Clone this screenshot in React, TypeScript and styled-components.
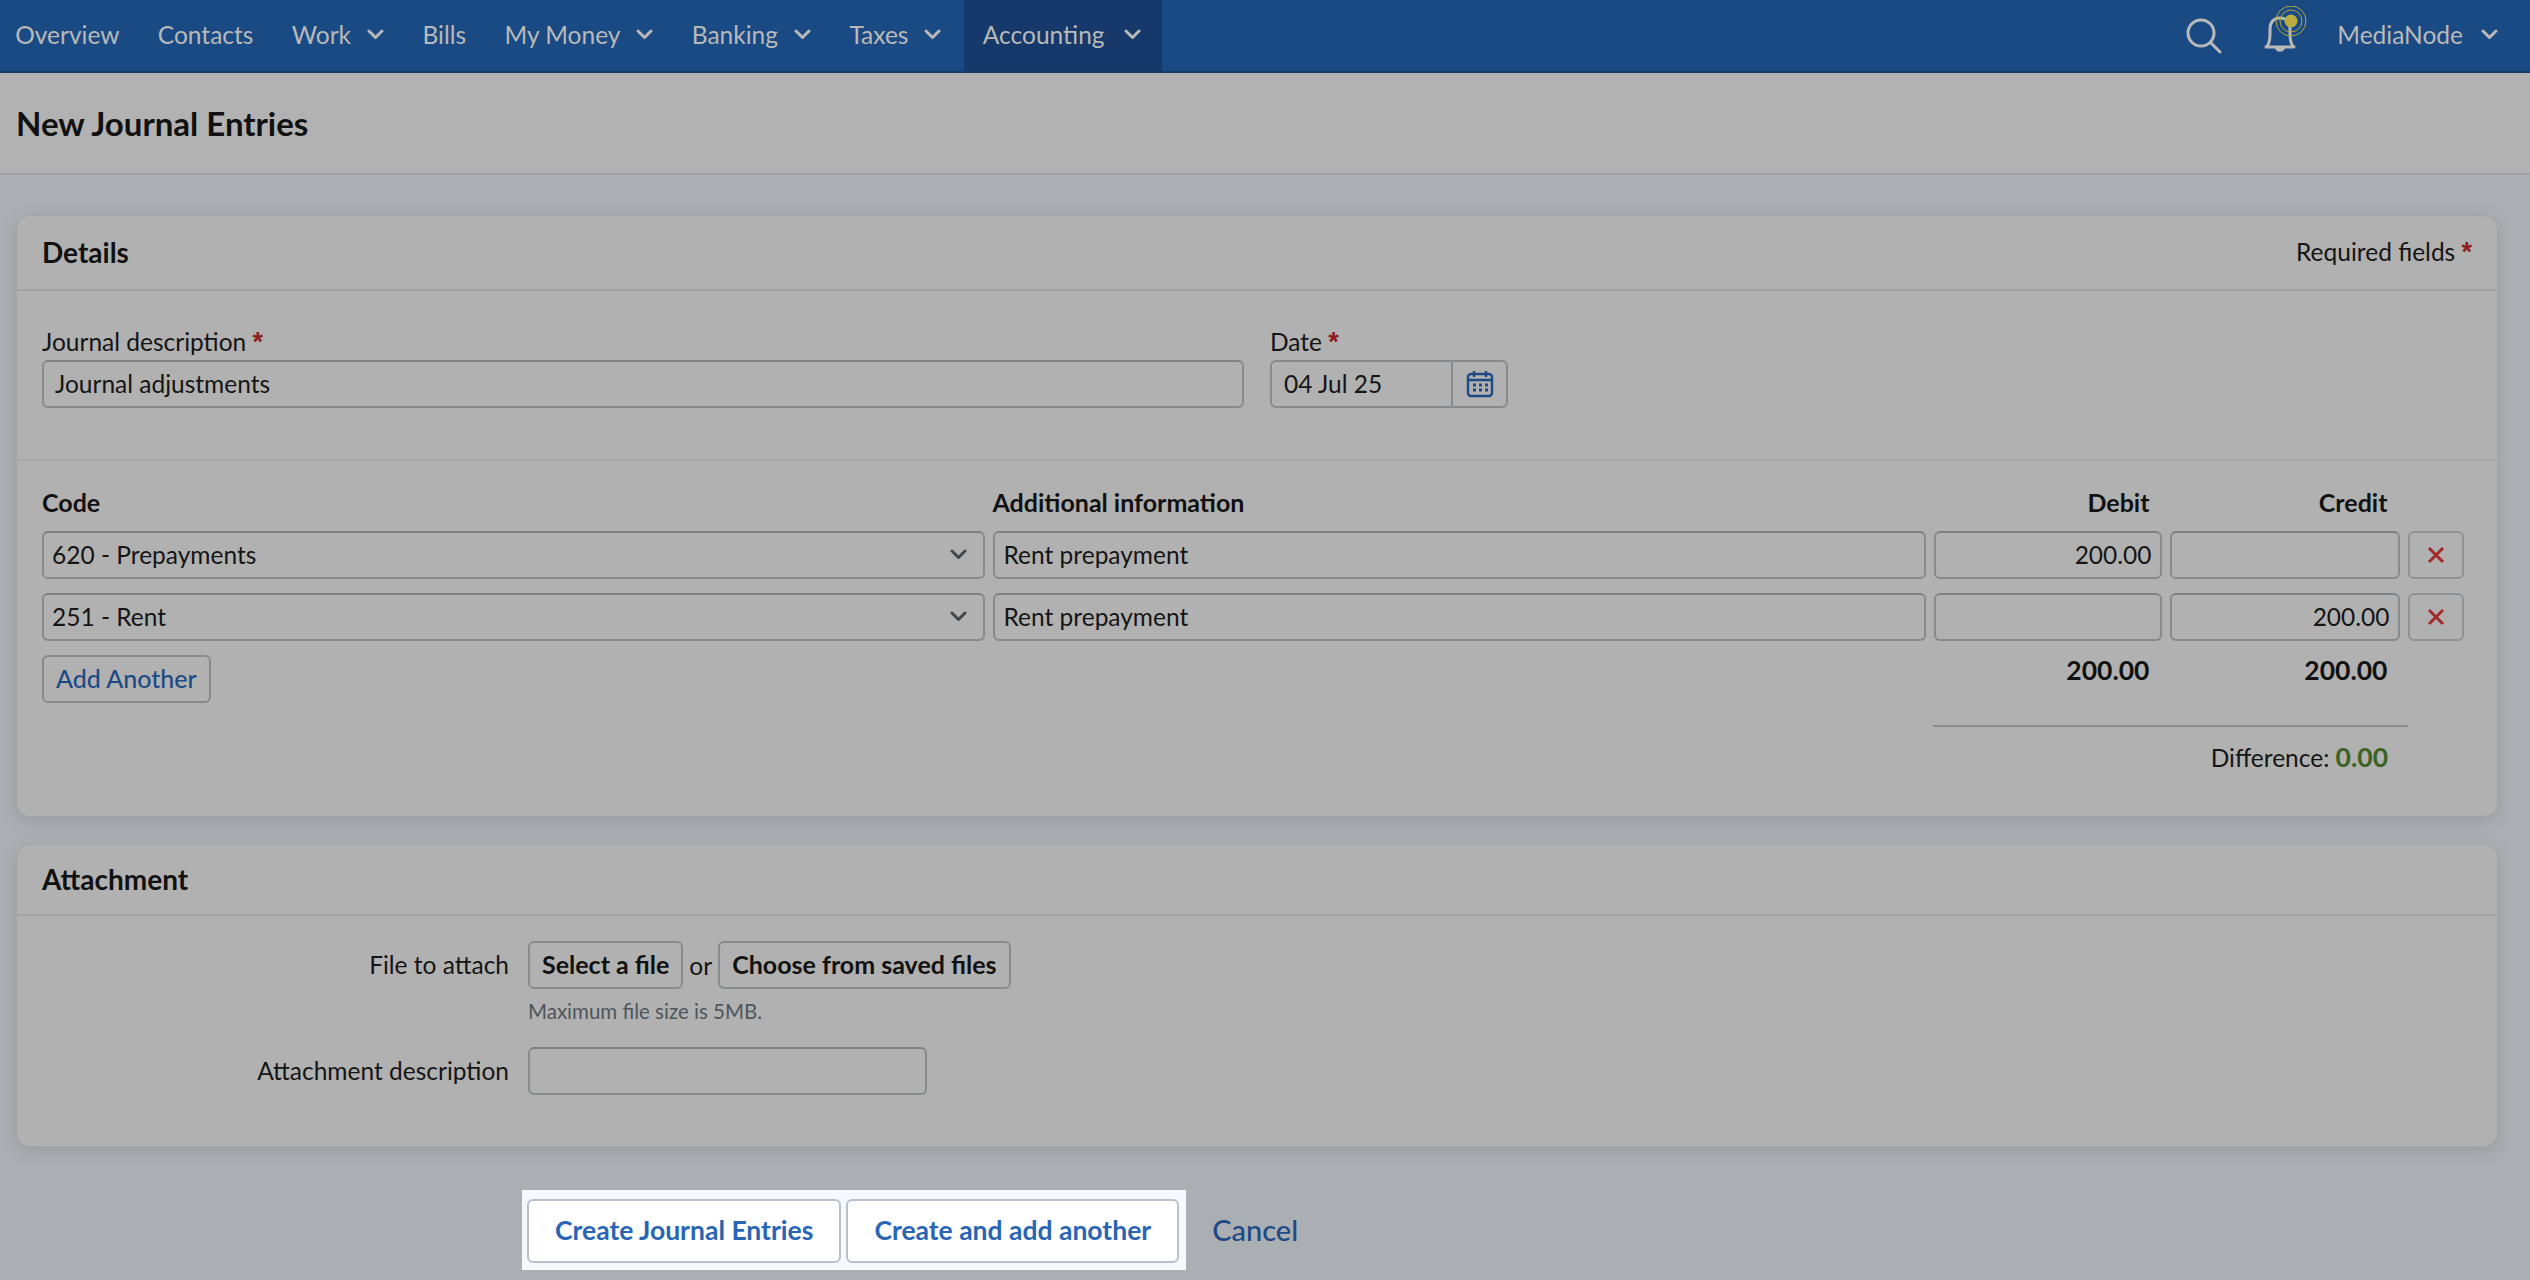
import React from 'react';
import styled, { createGlobalStyle } from 'styled-components';

const GlobalStyle = createGlobalStyle`
  html, body {
    margin: 0;
    padding: 0;
    width: 2530px;
    height: 1280px;
    overflow: hidden;
    background: #abaeb3;
    font-family: 'Lato', 'Liberation Sans', sans-serif;
    color: #151515;
  }
  * { box-sizing: border-box; }
`;

const TopBar = styled.nav`
  height: 73px;
  background: #1a4a83;
  border-bottom: 2px solid #153a68;
  display: flex;
  justify-content: space-between;
  color: #b9b9b9;
  font-size: 24.5px;
`;

const NavList = styled.div`
  display: flex;
  margin-left: -4px;
`;

const NavItem = styled.div<{ $active?: boolean }>`
  display: flex;
  align-items: center;
  gap: ${p => (p.$active ? 19 : 16)}px;
  margin-left: ${p => (p.$active ? 3 : 0)}px;
  padding: 0 ${p => (p.$active ? 21 : 19.2)}px 3px 19.2px;
  background: ${p => (p.$active ? '#14396a' : 'transparent')};
`;

const NavTools = styled.div`
  display: flex;
  align-items: center;
  padding-right: 32px;
`;

const UserMenu = styled.div`
  display: flex;
  align-items: center;
  gap: 18px;
  margin-left: 30px;
  padding-bottom: 3px;
`;

const SearchIcon = styled.svg`
  width: 36px;
  height: 38px;
  margin-right: 41px;
`;

const BellIcon = styled.svg`
  width: 44px;
  height: 48px;
  margin-bottom: 11px;
`;

const TitleBar = styled.header`
  height: 102px;
  background: #b2b2b2;
  border-bottom: 2px solid #a0a2a5;
  display: flex;
  align-items: center;
  padding: 0 16px 1px;

  h1 {
    margin: 0;
    font-size: 33px;
    font-weight: 700;
    color: #111;
  }
`;

const Content = styled.main`
  display: flex;
  flex-direction: column;
  gap: 27px;
  padding: 40px 32px 0 16px;
`;

const Card = styled.section`
  background: #b1b1b1;
  border: 1px solid #a3a5a8;
  border-radius: 14px;
  box-shadow: 0 4px 14px rgba(120, 124, 130, 0.35);
`;

const CardHeader = styled.div<{ $compact?: boolean }>`
  height: ${p => (p.$compact ? 71 : 75)}px;
  display: flex;
  align-items: center;
  justify-content: space-between;
  padding: 0 25px 2px;
  border-bottom: 2px solid #a2a3a5;
  font-size: 24.5px;

  h2 {
    margin: 0;
    font-size: 28px;
    font-weight: 700;
    color: #111;
  }
`;

const Star = styled.span`
  font-family: 'Liberation Sans', sans-serif;
  font-size: 27px;
  line-height: 0;
  font-weight: 700;
  color: #8f1d1d;
`;

const DetailsTop = styled.div`
  display: flex;
  gap: 26px;
  padding: 36px 25px 51px;
  border-bottom: 2px solid #a6a7a8;
`;

const FieldGroup = styled.div<{ $width: number }>`
  width: ${p => p.$width}px;
  display: flex;
  flex-direction: column;
  gap: 3px;
`;

const Label = styled.label`
  font-size: 24.5px;
  line-height: 30px;
`;

const Field = styled.div<{ $align?: string; $inset?: number }>`
  height: 48px;
  min-width: 0;
  display: flex;
  align-items: center;
  justify-content: ${p => p.$align || 'flex-start'};
  padding: 0 8px 2px ${p => p.$inset ?? 9}px;
  background: #b1b1b1;
  border: 2px solid #878b8d;
  border-top-color: #7d8183;
  border-radius: 6px;
  font-size: 24.5px;
  color: #151515;
`;

const Lined = styled.div`
  padding: 0 25px;
`;

const Chevron = styled.svg`
  width: 17px;
  height: 11px;
  flex: none;
`;

const DateField = styled.div`
  display: flex;
  height: 48px;
  border: 2px solid #878b8d;
  border-radius: 6px;
  font-size: 24.5px;

  span {
    flex: 1;
    display: flex;
    align-items: center;
    padding: 0 0 2px 12px;
  }
`;

const CalendarButton = styled.div`
  width: 55px;
  display: flex;
  align-items: center;
  justify-content: center;
  border-left: 2px solid #878b8d;
`;

const LinesGrid = styled.div`
  display: grid;
  grid-template-columns: 942.5px 933px 228px 230px 56px;
  column-gap: 8px;
  row-gap: 14px;
  padding-top: 27px;
`;

const HeadCell = styled.div<{ $right?: boolean }>`
  font-size: 25px;
  font-weight: 700;
  line-height: 29px;
  color: #111;
  text-align: ${p => (p.$right ? 'right' : 'left')};
  padding-right: ${p => (p.$right ? '12px' : '0')};
`;

const SelectField = styled(Field)`
  justify-content: space-between;
  padding-left: 8px;
  padding-right: 16px;
`;

const RemoveButton = styled.div`
  height: 48px;
  display: flex;
  align-items: center;
  justify-content: center;
  border: 2px solid #8f9395;
  border-radius: 6px;
`;

const LinesFooter = styled.div`
  display: grid;
  grid-template-columns: 1883.5px 228px 230px;
  column-gap: 8px;
  margin-top: 14px;
`;

const OutlineButton = styled.div<{ $link?: boolean }>`
  justify-self: start;
  height: 48px;
  display: inline-flex;
  align-items: center;
  padding: 0 12px 2px;
  border: 2px solid #878b8d;
  border-radius: 6px;
  font-size: 25px;
  font-weight: ${p => (p.$link ? 500 : 700)};
  color: ${p => (p.$link ? '#1c4a85' : '#111')};
`;

const Total = styled.div`
  font-size: 26.5px;
  font-weight: 700;
  text-align: right;
  padding-right: 12px;
  line-height: 30px;
  color: #111;
`;

const DifferenceBlock = styled.div`
  width: 475px;
  margin: 22px 0 0 1891px;
  padding: 15px 20px 0 0;
  border-top: 2px solid #8b8d8f;
  text-align: right;
  font-size: 24.5px;
  line-height: 30px;

  b {
    font-size: 26.5px;
    color: #3a6324;
    font-weight: 700;
  }
`;

const LinesBottom = styled.div`
  padding-bottom: 43px;
`;

const AttachBody = styled.div`
  display: grid;
  grid-template-columns: 476px 1fr;
  column-gap: 19px;
  row-gap: 7px;
  align-items: center;
  padding: 25px 16px 51px;
`;

const FormLabel = styled.div`
  text-align: right;
  font-size: 24.5px;
  padding-bottom: 2px;
`;

const FileRow = styled.div`
  display: flex;
  align-items: center;
  gap: 6px;
  font-size: 24.5px;
`;

const Hint = styled.div`
  grid-column: 2;
  font-size: 20.5px;
  line-height: 30px;
  margin-bottom: 14px;
  color: #4d565c;
`;

const ShortField = styled(Field)`
  width: 399px;
`;

const Actions = styled.div`
  display: flex;
  align-items: center;
  margin: 16px 0 0 506px;
`;

const Highlight = styled.div`
  display: flex;
  gap: 5px;
  padding: 9px 7px 7px 5px;
  background: #f5f8fe;
`;

const SubmitButton = styled.div`
  height: 64px;
  display: flex;
  align-items: center;
  justify-content: center;
  padding: 0 26px 2px;
  background: #fff;
  border: 2px solid #b9c0cb;
  border-radius: 6px;
  font-size: 26.5px;
  font-weight: 700;
  color: #2a65b5;
`;

const CancelLink = styled.a`
  margin-left: 26px;
  padding-bottom: 2px;
  font-size: 29px;
  font-weight: 500;
  color: #1d4a85;
`;

const ChevronDown = ({ color = '#b9b9b9' }: { color?: string }) => (
  <Chevron viewBox="0 0 17 11" fill="none" stroke={color} strokeWidth="3" strokeLinecap="round" strokeLinejoin="round">
    <path d="M2 2l6.5 6.5L15 2" />
  </Chevron>
);

const Cross = () => (
  <svg width="18" height="18" viewBox="0 0 18 18" fill="none" stroke="#a22a2a" strokeWidth="3">
    <path d="M2 2l14 14M16 2L2 16" />
  </svg>
);

const navItems = [
  { label: 'Overview' },
  { label: 'Contacts' },
  { label: 'Work', menu: true },
  { label: 'Bills' },
  { label: 'My Money', menu: true },
  { label: 'Banking', menu: true },
  { label: 'Taxes', menu: true },
  { label: 'Accounting', menu: true, active: true },
];

const lines = [
  { code: '620 - Prepayments', info: 'Rent prepayment', debit: '200.00', credit: '' },
  { code: '251 - Rent', info: 'Rent prepayment', debit: '', credit: '200.00' },
];

const App: React.FC = () => {
  return (
    <>
      <GlobalStyle />
      <TopBar>
        <NavList>
          {navItems.map(item => (
            <NavItem key={item.label} $active={item.active}>
              {item.label}
              {item.menu && <ChevronDown />}
            </NavItem>
          ))}
        </NavList>
        <NavTools>
          <SearchIcon viewBox="0 0 36 38" fill="none" stroke="#b9b9b9" strokeWidth="3" strokeLinecap="round">
            <circle cx="15" cy="16" r="13" />
            <path d="M25 26l9 9" />
          </SearchIcon>
          <BellIcon viewBox="0 0 44 48" fill="none">
            <path
              d="M3 41c3-2 4-6 4-13v-5c0-7 4-11 10-11s10 4 10 11v5c0 7 1 11 4 13z"
              stroke="#b9b9b9"
              strokeWidth="3"
              strokeLinejoin="round"
            />
            <path d="M12 42c1 5 9 5 10 0z" fill="#b9b9b9" />
            <circle cx="28" cy="15" r="11" stroke="#b5a93f" strokeWidth="1" />
            <circle cx="28" cy="15" r="15" stroke="#b5a93f" strokeWidth="1" />
            <circle cx="28" cy="15" r="6.5" fill="#b9ad3f" />
          </BellIcon>
          <UserMenu>
            MediaNode
            <ChevronDown />
          </UserMenu>
        </NavTools>
      </TopBar>
      <TitleBar>
        <h1>New Journal Entries</h1>
      </TitleBar>
      <Content>
        <Card>
          <CardHeader>
            <h2>Details</h2>
            <div>Required fields <Star>*</Star></div>
          </CardHeader>
          <DetailsTop>
            <FieldGroup $width={1202}>
              <Label>Journal description <Star>*</Star></Label>
              <Field $inset={11}>Journal adjustments</Field>
            </FieldGroup>
            <FieldGroup $width={238}>
              <Label>Date <Star>*</Star></Label>
              <DateField>
                <span>04 Jul 25</span>
                <CalendarButton>
                  <svg width="28" height="28" viewBox="0 0 28 28" fill="none" stroke="#1c4a85" strokeWidth="2.4">
                    <rect x="2" y="4" width="24" height="22" rx="3" />
                    <path d="M2 10h24M8 1v6M20 1v6" />
                    <path d="M7 15h3M13 15h3M19 15h3M7 20h3M13 20h3M19 20h3" strokeWidth="3" />
                  </svg>
                </CalendarButton>
              </DateField>
            </FieldGroup>
          </DetailsTop>
          <Lined>
            <LinesGrid>
              <HeadCell>Code</HeadCell>
              <HeadCell>Additional information</HeadCell>
              <HeadCell $right>Debit</HeadCell>
              <HeadCell $right>Credit</HeadCell>
              <div />
              {lines.map(line => (
                <React.Fragment key={line.code}>
                  <SelectField>
                    {line.code}
                    <ChevronDown color="#3f474d" />
                  </SelectField>
                  <Field>{line.info}</Field>
                  <Field $align="flex-end">{line.debit}</Field>
                  <Field $align="flex-end">{line.credit}</Field>
                  <RemoveButton>
                    <Cross />
                  </RemoveButton>
                </React.Fragment>
              ))}
            </LinesGrid>
            <LinesBottom>
              <LinesFooter>
                <OutlineButton $link>Add Another</OutlineButton>
                <Total>200.00</Total>
                <Total>200.00</Total>
              </LinesFooter>
              <DifferenceBlock>
                Difference: <b>0.00</b>
              </DifferenceBlock>
            </LinesBottom>
          </Lined>
        </Card>
        <Card>
          <CardHeader $compact>
            <h2>Attachment</h2>
          </CardHeader>
          <AttachBody>
            <FormLabel>File to attach</FormLabel>
            <FileRow>
              <OutlineButton>Select a file</OutlineButton>
              or
              <OutlineButton>Choose from saved files</OutlineButton>
            </FileRow>
            <Hint>Maximum file size is 5MB.</Hint>
            <FormLabel>Attachment description</FormLabel>
            <ShortField />
          </AttachBody>
        </Card>
        <Actions>
          <Highlight>
            <SubmitButton>Create Journal Entries</SubmitButton>
            <SubmitButton>Create and add another</SubmitButton>
          </Highlight>
          <CancelLink>Cancel</CancelLink>
        </Actions>
      </Content>
    </>
  );
};

export default App;
